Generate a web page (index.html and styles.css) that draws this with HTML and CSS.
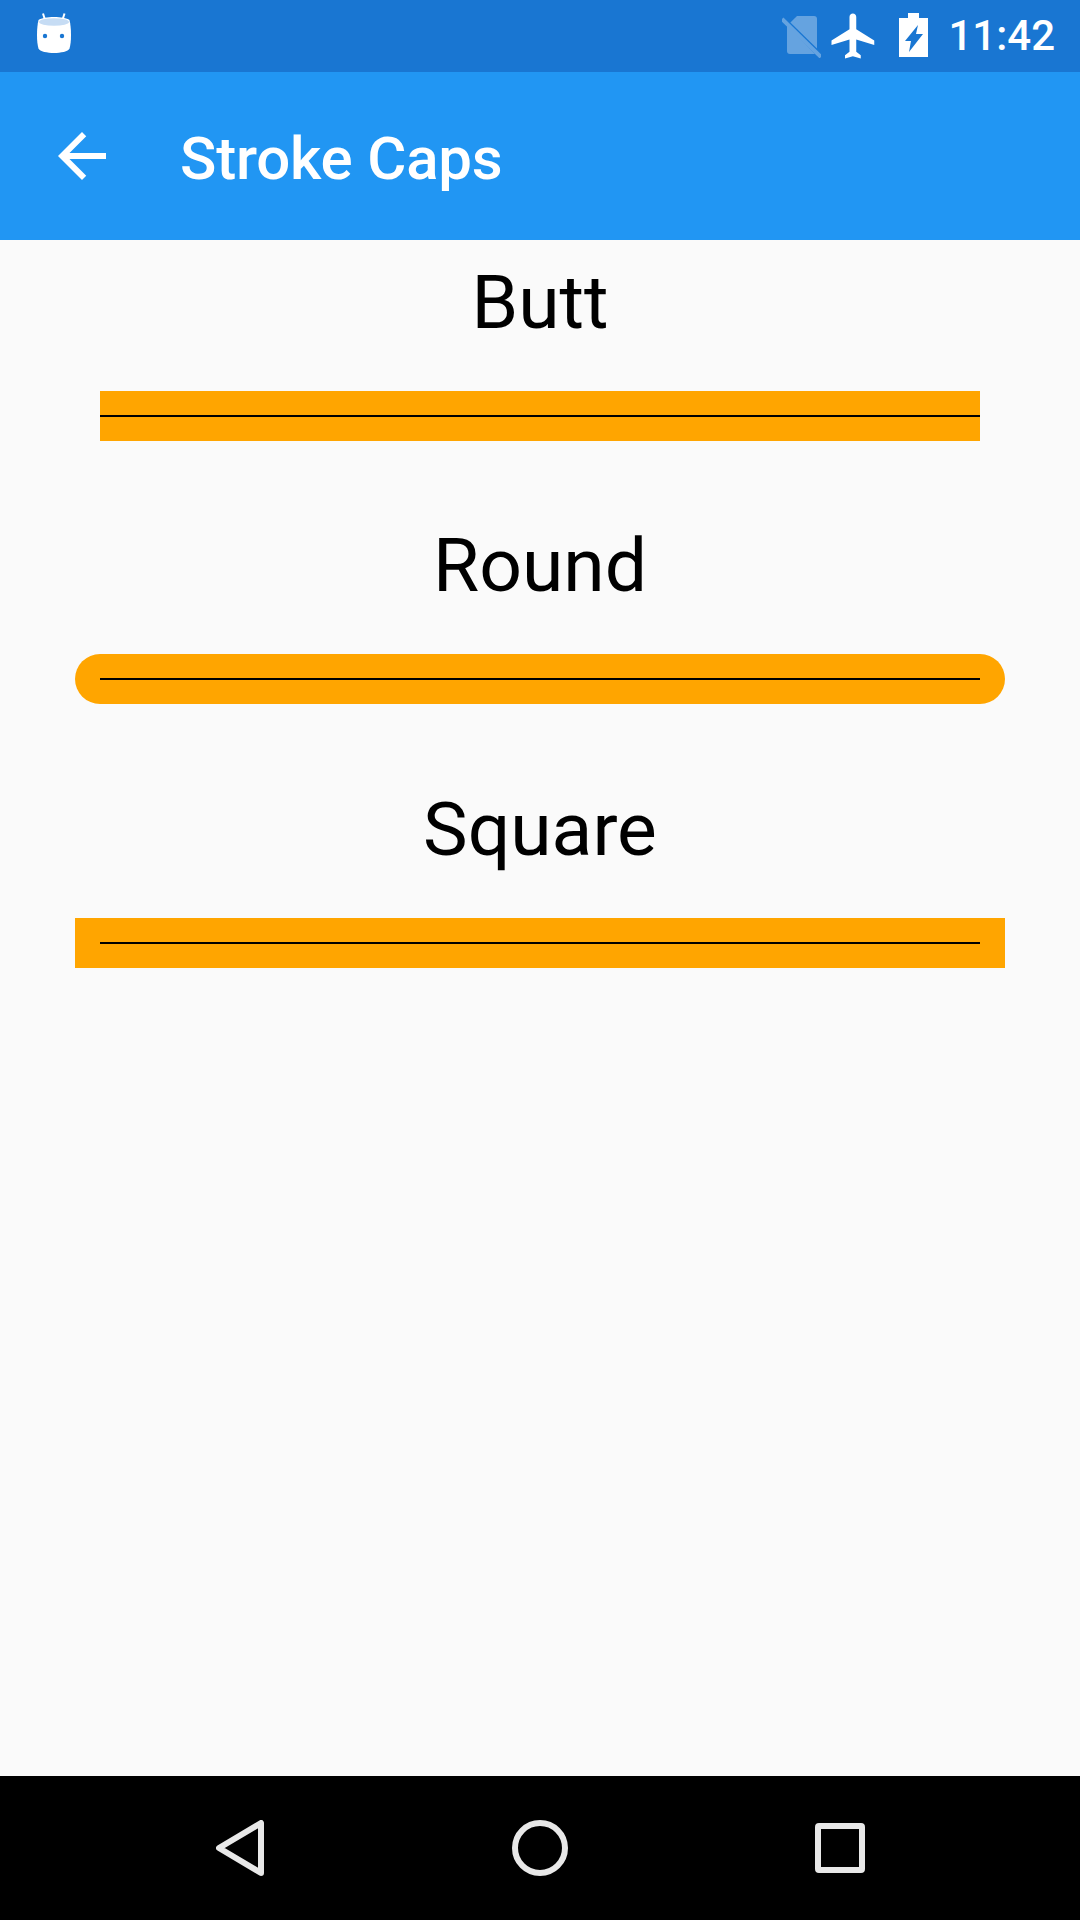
FILE: index.html
```html
<!DOCTYPE html>
<html lang="en">
<head>
<meta charset="utf-8">
<title>Stroke Caps</title>
<link rel="stylesheet" href="styles.css">
</head>
<body>
<div class="screen">
  <header class="status-bar">
    <svg class="ic-bot" viewBox="0 0 34 40" width="34" height="40"><path d="M6 0.500l2.500 8" class="ant"/><path d="M27.500 0.500l-2.500 8" class="ant"/><path d="M0 22c0-6 .5-11 1.500-15C7 3 27 3 32.500 7c1 4 1.500 9 1.500 15s-.5 10-1.500 13.500c-1 3-9 4.500-15.500 4.500S2.500 38.500 1.500 35.500C.5 32 0 28 0 22z" fill="#fff"/><ellipse cx="17" cy="9" rx="15" ry="3.800" fill="#c6dcf4"/><circle cx="8" cy="23" r="2.200" fill="#1976d2"/><circle cx="25" cy="23" r="2.200" fill="#1976d2"/></svg>
    <div class="status-right">
      <svg class="ic-sim" viewBox="0 0 39 42" width="39" height="42"><g opacity=".33" fill="#fff"><path d="M15 0H32a3 3 0 0 1 3 3V32.600L8.400 6.600z"/><path d="M5 9V35a3 3 0 0 0 3 3H33z"/><path d="M0 3l39 38" stroke="#fff" stroke-width="4"/></g></svg>
      <svg class="ic-plane" viewBox="0 0 24 24" width="54" height="54"><path fill="#fff" d="M21 16v-2l-8-5V3.500c0-.83-.67-1.500-1.500-1.500S10 2.670 10 3.500V9l-8 5v2l8-2.500V19l-2 1.500V22l3.500-1 3.500 1v-1.500L13 19v-5.500l8 2.500z"/></svg>
      <svg class="ic-batt" viewBox="0 0 29 44" width="29" height="44"><path fill="#fff" fill-rule="evenodd" d="M9 0h11v5h9v39H0V5h9zM19 12L6 28h6l-2 11 14-18h-7z"/></svg>
      <span class="clock">11:42</span>
    </div>
  </header>
  <div class="app-bar">
    <svg class="ic-back" viewBox="0 0 24 24" width="72" height="72"><path fill="#fff" d="M20 11H7.830l5.590-5.590L12 4l-8 8 8 8 1.410-1.410L7.830 13H20v-2z"/></svg>
    <h1 class="title">Stroke Caps</h1>
  </div>
  <main class="content">
    <section class="demo">
      <h2 class="label">Butt</h2>
      <div class="stroke butt"><span class="hairline"></span></div>
    </section>
    <section class="demo">
      <h2 class="label">Round</h2>
      <div class="stroke round"><span class="hairline"></span></div>
    </section>
    <section class="demo">
      <h2 class="label">Square</h2>
      <div class="stroke square"><span class="hairline"></span></div>
    </section>
  </main>
  <nav class="nav-bar">
    <svg viewBox="0 0 48 56" width="48" height="56"><path d="M45 3v50L3 28z" class="nav-shape"/></svg>
    <svg viewBox="0 0 56 56" width="56" height="56"><circle cx="28" cy="28" r="25" class="nav-shape"/></svg>
    <svg viewBox="0 0 50 50" width="50" height="50"><rect x="3" y="3" width="44" height="44" rx="1" class="nav-shape"/></svg>
  </nav>
</div>
</body>
</html>
```
FILE: styles.css
```css
* { box-sizing: border-box; margin: 0; padding: 0; }
html, body { width: 1080px; height: 1920px; overflow: hidden; }
body { font-family: Roboto, sans-serif; background: #fafafa; }
.screen { display: flex; flex-direction: column; width: 1080px; height: 1920px; }
.status-bar { flex: 0 0 72px; background: #1976d2; display: flex; align-items: center; justify-content: space-between; padding: 0 25px 0 37px; }
.ic-bot { margin-top: -6px; }
.ant { stroke: #fff; stroke-width: 2; fill: none; }
.status-right { display: flex; align-items: center; }
.ic-sim { margin-top: 2px; }
.ic-plane { margin-left: 6px; }
.ic-batt { margin-left: 18px; margin-top: -2px; }
.clock { margin-left: 20px; color: #fff; font-size: 42px; font-weight: 500; line-height: 72px; }
.app-bar { flex: 0 0 168px; background: #2196f3; display: flex; align-items: center; padding-left: 46px; }
.title { margin-left: 62px; margin-top: 6px; color: #fff; font-size: 60px; font-weight: 500; line-height: 72px; letter-spacing: -0.2px; }
.content { flex: 1; display: flex; flex-direction: column; }
.demo { height: 263.33px; display: flex; flex-direction: column; align-items: center; }
.label { font-size: 75px; font-weight: 400; line-height: 124px; color: #000; text-align: center; }
.stroke { position: relative; height: 50px; margin-top: 27px; background: #ffa500; }
.butt { width: 880px; }
.round { width: 930px; border-radius: 25px; }
.square { width: 930px; }
.hairline { position: absolute; left: 50%; top: 24px; width: 880px; height: 2px; margin-left: -440px; background: #000; }
.nav-bar { flex: 0 0 144px; background: #000; display: flex; align-items: center; padding: 0 215px 0 216px; justify-content: space-between; }
.nav-shape { fill: none; stroke: #e8e8e8; stroke-width: 6; stroke-linejoin: round; }
```
